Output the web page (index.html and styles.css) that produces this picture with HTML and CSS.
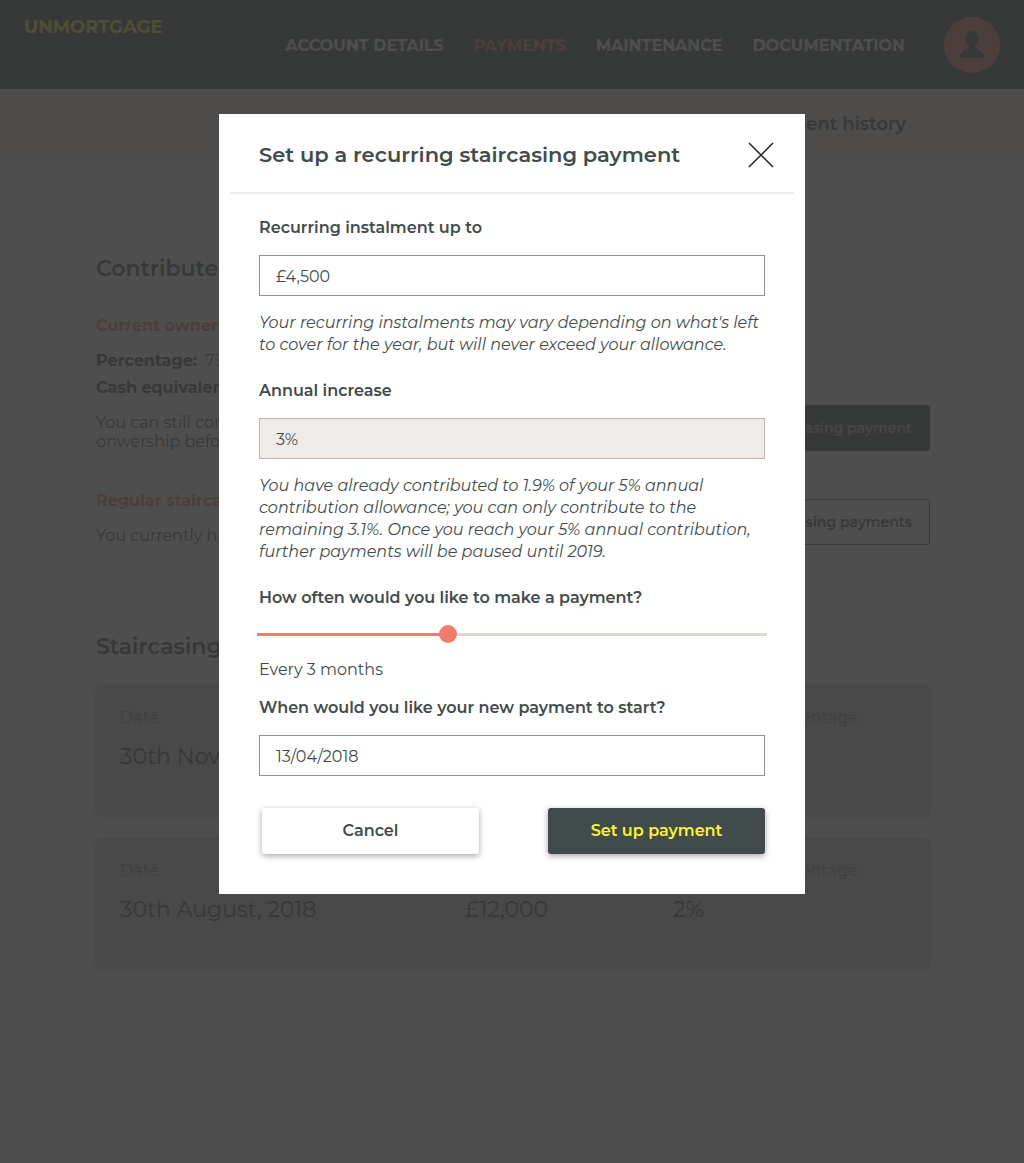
FILE: index.html
```html
<!DOCTYPE html>
<html lang="en">
<head>
<meta charset="utf-8">
<meta name="viewport" content="width=device-width, initial-scale=1">
<title>Unmortgage – Payments</title>
<link rel="stylesheet" href="styles.css">
</head>
<body>
<header class="site-header">
  <a class="brand" href="#">UNMORTGAGE</a>
  <nav class="main-nav" aria-label="Main">
    <a href="#">ACCOUNT DETAILS</a>
    <a class="active" href="#">PAYMENTS</a>
    <a href="#">MAINTENANCE</a>
    <a href="#">DOCUMENTATION</a>
  </nav>
  <a class="avatar" href="#" aria-label="Your profile">
    <svg viewBox="0 0 56 56" width="56" height="56" aria-hidden="true">
      <path d="M28 14c4 0 6.500 3.200 6.500 7.500 0 3.500-1.500 6.500-3.700 8 .3 3 9.200 2.500 9.200 11.500H16c0-9 8.900-8.500 9.200-11.500-2.200-1.500-3.700-4.500-3.700-8C21.500 17.200 24 14 28 14z"/>
    </svg>
  </a>
</header>
<nav class="sub-nav" aria-label="Payments">
  <a href="#">Payment history</a>
</nav>
<main class="content">
  <h2>Contribute more</h2>
  <section class="summary">
    <div class="summary-text">
      <h3>Current ownership</h3>
      <p class="fact"><strong>Percentage:</strong>&nbsp; 7%</p>
      <p class="fact"><strong>Cash equivalent:</strong></p>
      <p class="note">You can still contribute to your<br>onwership before 2019.</p>
    </div>
    <button class="page-button solid" type="button">Make a staircasing payment</button>
  </section>
  <section class="summary">
    <div class="summary-text">
      <h3>Regular staircasing</h3>
      <p class="note">You currently have none.</p>
    </div>
    <button class="page-button" type="button">Set up staircasing payments</button>
  </section>
  <h2 class="history-title">Staircasing history</h2>
  <dl class="card">
    <div><dt>Date</dt><dd>30th November</dd></div>
    <div><dt>Amount</dt><dd>£12,000</dd></div>
    <div><dt>Ownership percentage</dt><dd>2%</dd></div>
  </dl>
  <dl class="card">
    <div><dt>Date</dt><dd>30th August, 2018</dd></div>
    <div><dt>Amount</dt><dd>£12,000</dd></div>
    <div><dt>Ownership percentage</dt><dd>2%</dd></div>
  </dl>
</main>

<div class="overlay">
  <div class="modal" role="dialog" aria-modal="true" aria-labelledby="modal-title">
    <div class="modal-head">
      <h1 id="modal-title">Set up a recurring staircasing payment</h1>
      <button class="close" type="button" aria-label="Close">
        <svg viewBox="0 0 26 26" width="26" height="26" aria-hidden="true"><path d="M1 1L25 25M25 1L1 25"/></svg>
      </button>
    </div>
    <form class="modal-body">
      <div class="field">
        <label for="instalment">Recurring instalment up to</label>
        <input class="text-input" id="instalment" type="text" value="£4,500">
        <p class="help">Your recurring instalments may vary depending on what's left to cover for the year, but will never exceed your allowance.</p>
      </div>
      <div class="field">
        <label for="increase">Annual increase</label>
        <input class="text-input" id="increase" type="text" value="3%" readonly>
        <p class="help">You have already contributed to 1.9% of your 5% annual contribution allowance; you can only contribute to the remaining 3.1%. Once you reach your 5% annual contribution, further payments will be paused until 2019.</p>
      </div>
      <div class="field">
        <label for="frequency">How often would you like to make a payment?</label>
        <input class="slider" id="frequency" type="range" min="0" max="100" value="37">
        <output for="frequency">Every 3 months</output>
        <label for="start">When would you like your new payment to start?</label>
        <input class="text-input" id="start" type="text" value="13/04/2018">
      </div>
      <div class="actions">
        <button class="action" type="button">Cancel</button>
        <button class="action primary" type="submit">Set up payment</button>
      </div>
    </form>
  </div>
</div>
</body>
</html>
```
FILE: styles.css
```css
:root {
  --slate: #424b4b;
  --coral: #ee7d6c;
  --yellow: #faf532;
}
* { box-sizing: border-box; }
body {
  margin: 0;
  min-height: 100vh;
  background: #fff;
  color: var(--slate);
  font: 400 16px/22px Montserrat, Inter, sans-serif;
}
h1, h2, h3, p, dl, dd { margin: 0; }
a { color: inherit; text-decoration: none; }
button, input { font: inherit; color: inherit; }

.site-header {
  display: flex;
  align-items: center;
  gap: 39px;
  height: 89px;
  padding: 0 24px;
  background: var(--slate);
  color: #fff;
}
.brand {
  align-self: flex-start;
  margin: 16px auto 0 0;
  color: var(--yellow);
  font-size: 18px;
  font-weight: 700;
}
.main-nav {
  display: flex;
  gap: 30px;
  padding-top: 2px;
  font-weight: 700;
  white-space: nowrap;
}
.main-nav .active { color: var(--coral); }
.avatar { display: block; height: 56px; border-radius: 50%; background: var(--coral); }
.avatar svg { display: block; fill: var(--slate); }

.sub-nav {
  display: flex;
  justify-content: flex-end;
  align-items: center;
  height: 70px;
  padding: 0 118px;
  background: #f5edd9;
  font-size: 18px;
  font-weight: 600;
}

.content { padding: 96px 94px 96px 96px; }
h2 { font-size: 22px; line-height: 28px; font-weight: 600; }
h3 { color: var(--coral); font-size: 16px; font-weight: 700; }
.summary { display: flex; justify-content: space-between; align-items: flex-end; margin-top: 32px; }
.summary + .summary { margin-top: 39px; }
.fact { margin-top: 5px; }
h3 + .fact { margin-top: 13px; }
.note { margin-top: 14px; line-height: 19px; }
.page-button {
  height: 46px;
  padding: 0 17px;
  border: 1px solid var(--slate);
  border-radius: 3px;
  background: transparent;
  font-size: 14px;
  font-weight: 600;
}
.page-button.solid { background: var(--slate); color: #b9b9b9; }
.history-title { margin: 88px 0 24px; }
.card {
  display: grid;
  grid-template-columns: 345px 208px 1fr;
  min-height: 130px;
  padding: 22px 24px;
  border-radius: 4px;
  background: #d3d3d3;
  box-shadow: 0 1px 4px #bbb;
}
.card + .card { margin-top: 23px; }
dt { color: #958a83; }
dd { margin-top: 14px; font-size: 22px; line-height: 28px; }

.overlay {
  position: fixed;
  inset: 0;
  display: flex;
  justify-content: center;
  align-items: flex-start;
  padding: 114px 16px 32px;
  overflow-y: auto;
  background: rgba(53, 53, 53, 0.88);
}
.modal { width: 100%; max-width: 586px; background: #fff; }
.modal-head {
  display: flex;
  justify-content: space-between;
  align-items: center;
  height: 80px;
  margin: 0 11px;
  padding: 4px 20px 0 29px;
  border-bottom: 2px solid #efebe9;
}
h1 { font-size: 21px; line-height: 28px; font-weight: 600; }
.close { padding: 0; border: 0; background: none; }
.close svg { display: block; fill: none; stroke: #222; stroke-width: 1.5; }
.modal-body { display: flex; flex-direction: column; gap: 24px; padding: 23px 40px 40px; }
.field { display: flex; flex-direction: column; gap: 16px; }
label { font-weight: 600; }
.text-input {
  width: 100%;
  height: 41px;
  padding: 1px 16px 0;
  border: 1px solid #919494;
  border-radius: 0;
  background: #fff;
}
.text-input[readonly] { border-color: #c0b4b0; background: #efebe9; }
.help { font-style: italic; }
.slider {
  appearance: none;
  align-self: stretch;
  height: 18px;
  margin: 0 -2px;
  background: linear-gradient(to right, var(--coral) 38%, #ded7d2 38%) center / 100% 3px no-repeat;
}
.slider::-webkit-slider-thumb {
  appearance: none;
  width: 18px;
  height: 18px;
  border-radius: 50%;
  background: var(--coral);
}
.actions { display: flex; justify-content: space-between; gap: 16px; padding: 8px 0 0 3px; }
.action {
  width: 217px;
  height: 46px;
  border: 0;
  border-radius: 3px;
  background: #fff;
  box-shadow: 0 2px 6px rgba(0, 0, 0, 0.35);
  font-weight: 600;
}
.action.primary { background: var(--slate); color: var(--yellow); }
```
